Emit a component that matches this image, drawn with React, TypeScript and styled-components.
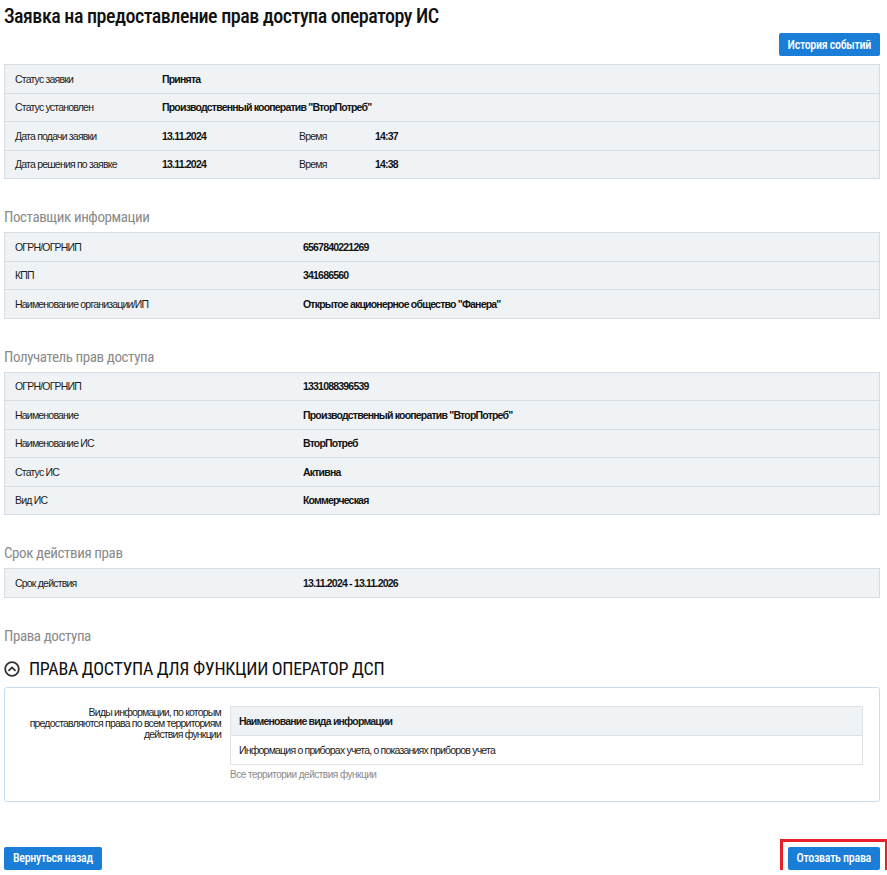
import React from 'react'
import styled, { createGlobalStyle } from 'styled-components'

const GlobalStyle = createGlobalStyle`
  html, body {
    margin: 0;
    padding: 0;
    background: #ffffff;
  }
  body {
    font-family: "Liberation Sans", Arial, sans-serif;
    font-size: 10.5px;
    letter-spacing: -0.8px;
    color: #1b1b1b;
  }
`

const narrow = `"Roboto Condensed", "Liberation Sans Narrow", "Arial Narrow", Roboto, sans-serif`

const Page = styled.div`
  display: flex;
  flex-direction: column;
  padding: 4px 7px 0 4px;
`

const Title = styled.h1`
  margin: 0;
  font-family: ${narrow};
  font-stretch: condensed;
  font-weight: 500;
  font-size: 20px;
  line-height: 24px;
  letter-spacing: -0.5px;
  color: #111;
`

const Toolbar = styled.div<{ $top: number; $spread?: boolean }>`
  display: flex;
  justify-content: ${p => (p.$spread ? 'space-between' : 'flex-end')};
  margin-top: ${p => p.$top}px;
`

const Button = styled.button<{ $marked?: boolean }>`
  position: relative;
  height: 23px;
  padding: 0 9px;
  border: none;
  border-radius: 2px;
  background: #1a7ed8;
  color: #fff;
  font-family: ${narrow};
  font-stretch: condensed;
  font-weight: 500;
  font-size: 12px;
  letter-spacing: -0.3px;
  cursor: pointer;
  ${p =>
    p.$marked &&
    `&::after {
      content: '';
      position: absolute;
      inset: -8px;
      border: 3px solid #e8202a;
    }`}
`

const Table = styled.div<{ $top: number }>`
  margin-top: ${p => p.$top}px;
  border: 1px solid #d6dce2;
  background: #f0f3f6;
`

const Row = styled.div<{ $cols: string }>`
  display: grid;
  grid-template-columns: ${p => p.$cols};
  align-items: center;
  height: 27.5px;
  padding-left: 10px;
  border-bottom: 1px solid #d6dce2;
  &:last-child {
    border-bottom: none;
  }
`

const Label = styled.span`
  color: #1b1b1b;
`

const Value = styled.span<{ $span?: boolean }>`
  font-weight: 700;
  color: #111;
  white-space: nowrap;
  ${p => p.$span && 'grid-column: 2 / -1;'}
`

const SectionTitle = styled.h2`
  margin: 29px 0 0;
  font-family: ${narrow};
  font-stretch: condensed;
  font-weight: 400;
  font-size: 15px;
  line-height: 18px;
  letter-spacing: -0.4px;
  color: #8a8a8a;
`

const AccordionHead = styled.div`
  display: flex;
  align-items: center;
  gap: 9px;
  margin-top: 13px;
  font-family: ${narrow};
  font-stretch: condensed;
  font-size: 18px;
  line-height: 22px;
  letter-spacing: -0.3px;
  color: #111;
`

const AccordionBody = styled.div`
  display: grid;
  grid-template-columns: 216px 1fr;
  column-gap: 9px;
  margin-top: 7px;
  padding: 18px 16px 21px 0;
  border: 1px solid #c7ddf0;
  border-radius: 3px;
`

const SideLabel = styled.div`
  text-align: right;
  line-height: 11px;
  padding-top: 1px;
`

const KindTable = styled.div`
  border: 1px solid #dde3e8;
`

const KindRow = styled.div<{ $head?: boolean }>`
  display: flex;
  align-items: center;
  height: 28px;
  padding-left: 8px;
  background: ${p => (p.$head ? '#f0f3f6' : '#fff')};
  font-weight: ${p => (p.$head ? 700 : 400)};
  border-bottom: 1px solid #dde3e8;
  &:last-child {
    border-bottom: none;
  }
`

const Hint = styled.div`
  margin-top: 4px;
  font-size: 10px;
  letter-spacing: -0.5px;
  color: #8a8a8a;
`

const ChevronCircle = () => (
  <svg width="16" height="16" viewBox="0 0 16 16" fill="none">
    <circle cx="8" cy="8" r="6.8" stroke="#333" strokeWidth="1.8" />
    <path d="M5 9.4 L8 6.4 L11 9.4" stroke="#333" strokeWidth="1.8" strokeLinecap="round" strokeLinejoin="round" />
  </svg>
)

type Cell = { text: string; bold?: boolean }

const statusRows: Cell[][] = [
  [{ text: 'Статус заявки' }, { text: 'Принята', bold: true }],
  [{ text: 'Статус установлен' }, { text: 'Производственный кооператив "ВторПотреб"', bold: true }],
  [{ text: 'Дата подачи заявки' }, { text: '13.11.2024', bold: true }, { text: 'Время' }, { text: '14:37', bold: true }],
  [{ text: 'Дата решения по заявке' }, { text: '13.11.2024', bold: true }, { text: 'Время' }, { text: '14:38', bold: true }]
]

const supplierRows: Cell[][] = [
  [{ text: 'ОГРН/ОГРНИП' }, { text: '6567840221269', bold: true }],
  [{ text: 'КПП' }, { text: '341686560', bold: true }],
  [{ text: 'Наименование организации/ИП' }, { text: 'Открытое акционерное общество "Фанера"', bold: true }]
]

const receiverRows: Cell[][] = [
  [{ text: 'ОГРН/ОГРНИП' }, { text: '1331088396539', bold: true }],
  [{ text: 'Наименование' }, { text: 'Производственный кооператив "ВторПотреб"', bold: true }],
  [{ text: 'Наименование ИС' }, { text: 'ВторПотреб', bold: true }],
  [{ text: 'Статус ИС' }, { text: 'Активна', bold: true }],
  [{ text: 'Вид ИС' }, { text: 'Коммерческая', bold: true }]
]

const termRows: Cell[][] = [
  [{ text: 'Срок действия' }, { text: '13.11.2024 - 13.11.2026', bold: true }]
]

const InfoTable = ({ rows, cols, top }: { rows: Cell[][]; cols: string; top: number }) => (
  <Table $top={top}>
    {rows.map((row, i) => (
      <Row key={i} $cols={cols}>
        {row.map((cell, j) =>
          cell.bold ? (
            <Value key={j} $span={row.length === 2}>
              {cell.text}
            </Value>
          ) : (
            <Label key={j}>{cell.text}</Label>
          )
        )}
      </Row>
    ))}
  </Table>
)

export default function App() {
  return (
    <>
      <GlobalStyle />
      <Page>
        <Title>Заявка на предоставление прав доступа оператору ИС</Title>
        <Toolbar $top={5}>
          <Button>История событий</Button>
        </Toolbar>
        <InfoTable rows={statusRows} cols="147px 137px 76px 1fr" top={8} />

        <SectionTitle>Поставщик информации</SectionTitle>
        <InfoTable rows={supplierRows} cols="288px 1fr" top={6} />

        <SectionTitle>Получатель прав доступа</SectionTitle>
        <InfoTable rows={receiverRows} cols="288px 1fr" top={6} />

        <SectionTitle>Срок действия прав</SectionTitle>
        <InfoTable rows={termRows} cols="288px 1fr" top={6} />

        <SectionTitle>Права доступа</SectionTitle>
        <AccordionHead>
          <ChevronCircle />
          ПРАВА ДОСТУПА ДЛЯ ФУНКЦИИ ОПЕРАТОР ДСП
        </AccordionHead>
        <AccordionBody>
          <SideLabel>
            Виды информации, по которым
            <br />
            предоставляются права по всем территориям
            <br />
            действия функции
          </SideLabel>
          <div>
            <KindTable>
              <KindRow $head>Наименование вида информации</KindRow>
              <KindRow>Информация о приборах учета, о показаниях приборов учета</KindRow>
            </KindTable>
            <Hint>Все территории действия функции</Hint>
          </div>
        </AccordionBody>

        <Toolbar $top={45} $spread>
          <Button>Вернуться назад</Button>
          <Button $marked>Отозвать права</Button>
        </Toolbar>
      </Page>
    </>
  )
}
